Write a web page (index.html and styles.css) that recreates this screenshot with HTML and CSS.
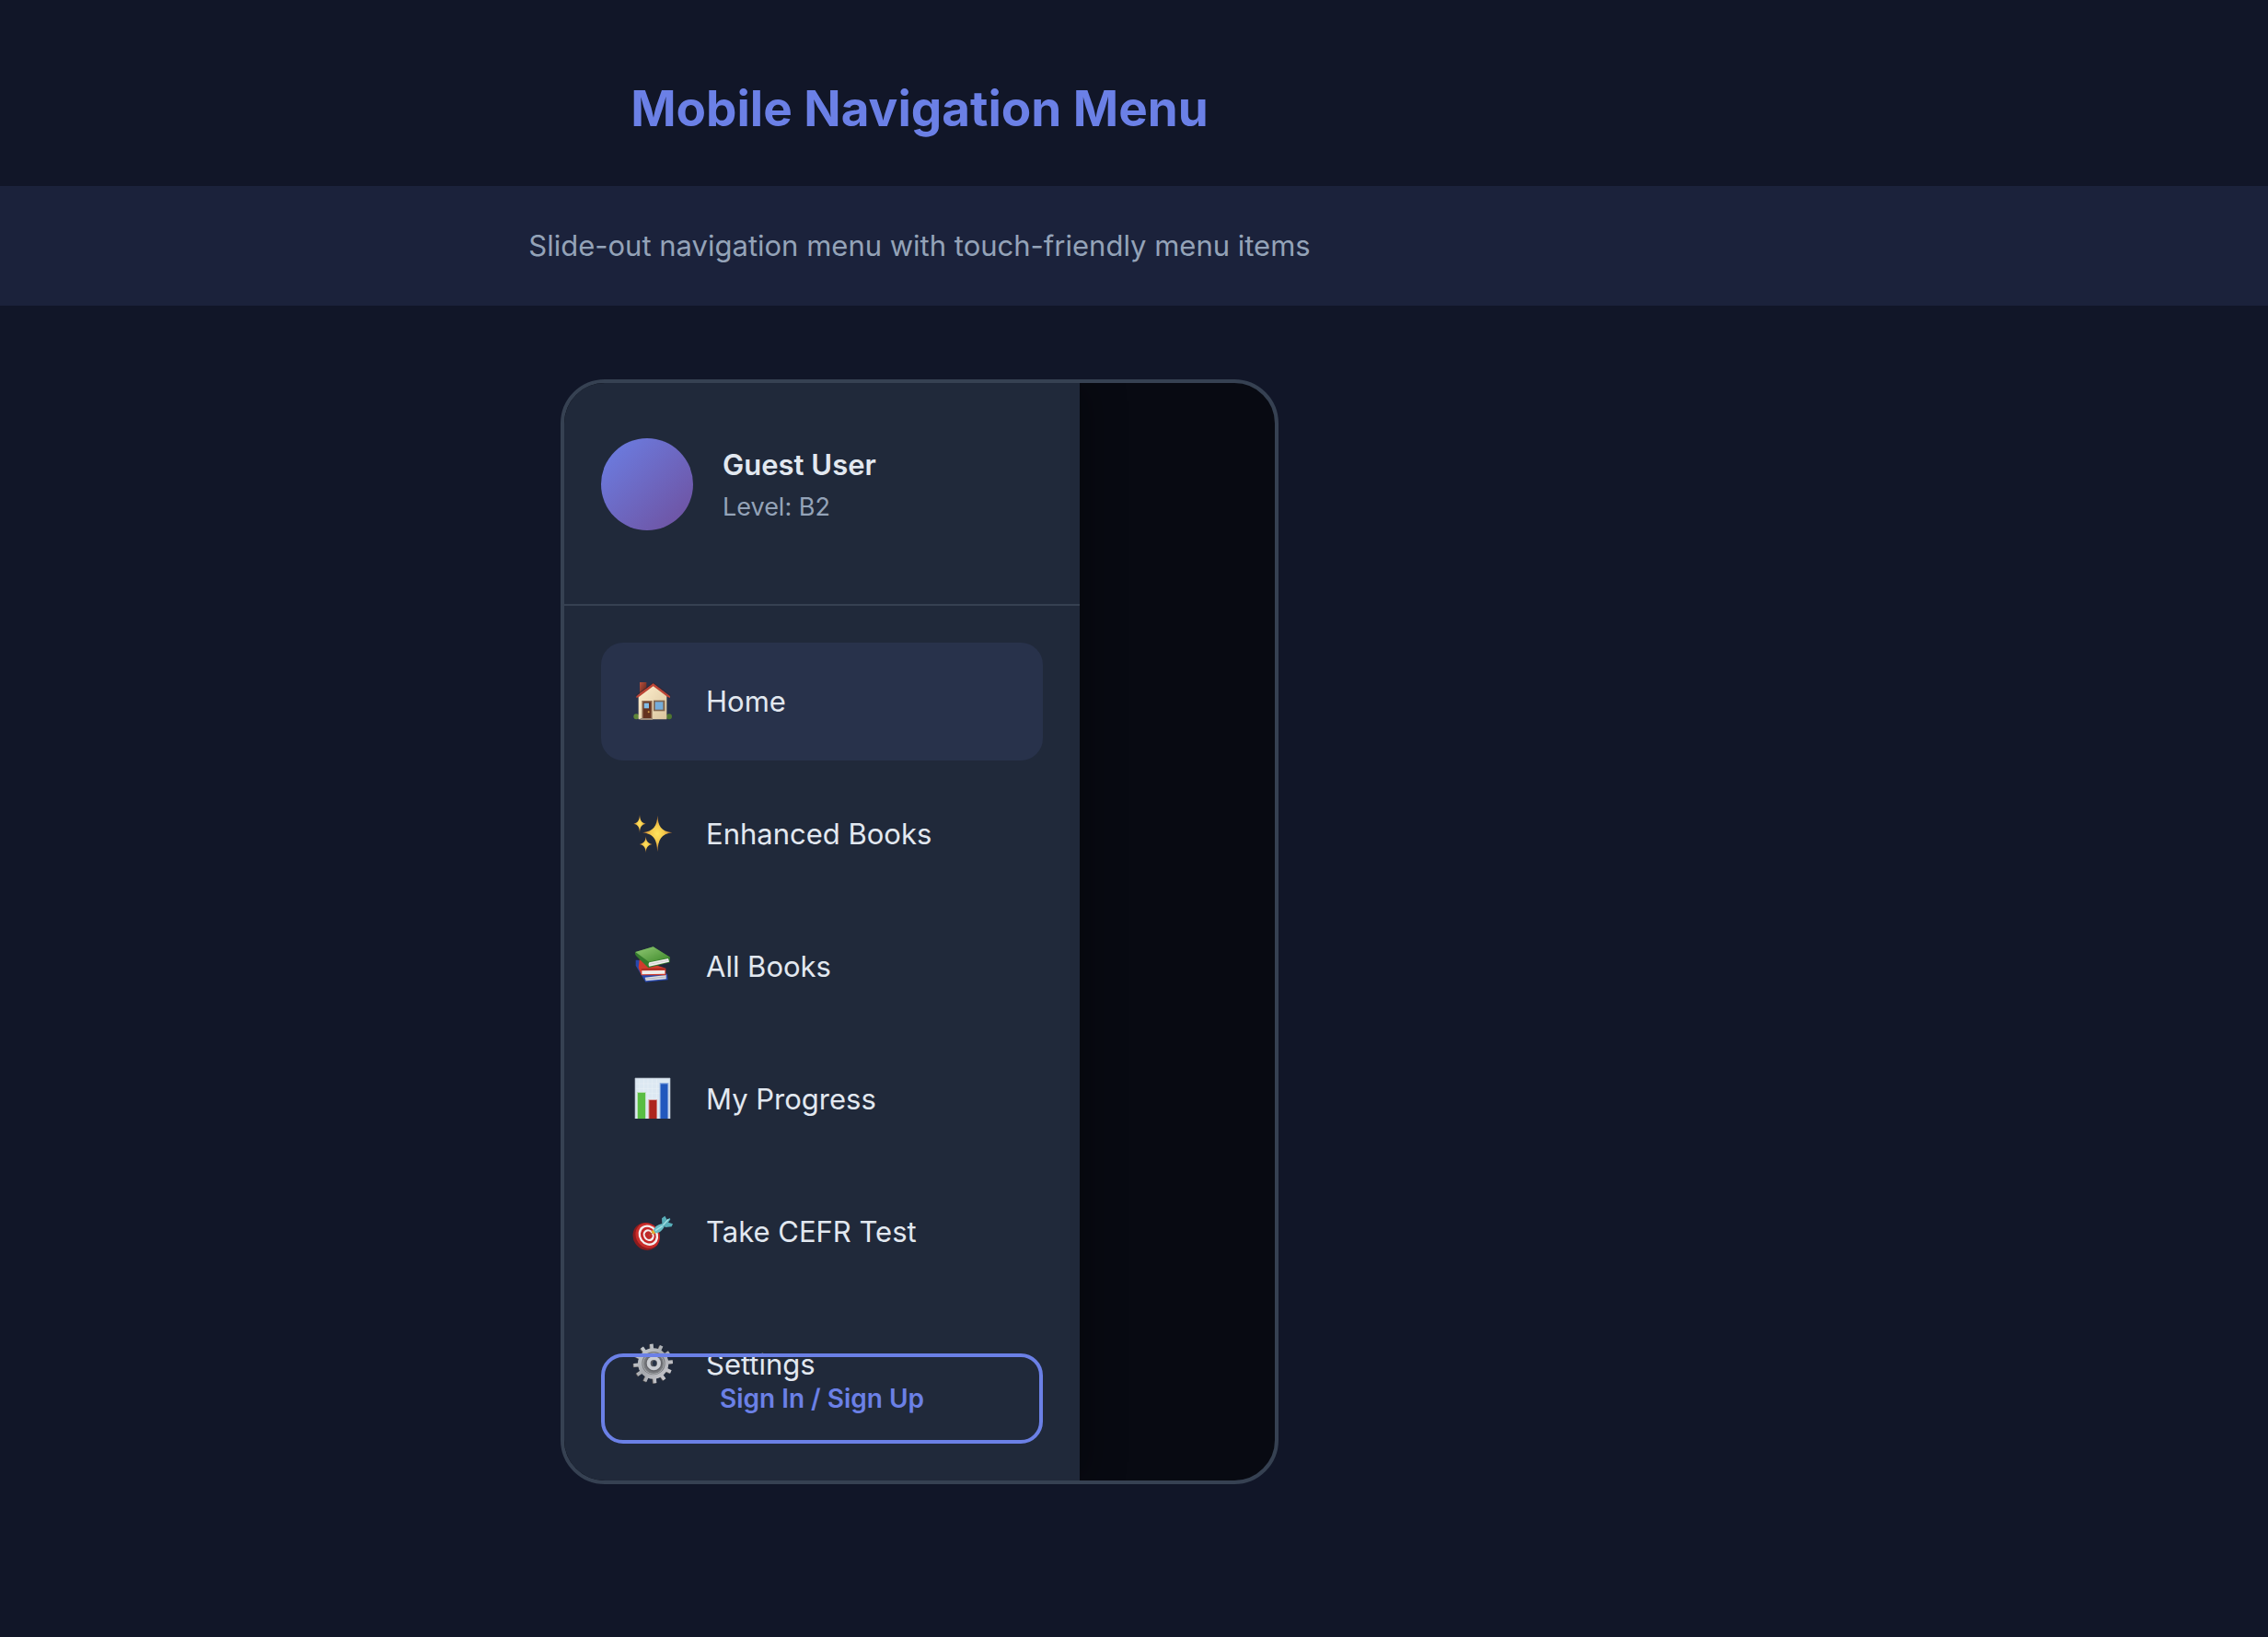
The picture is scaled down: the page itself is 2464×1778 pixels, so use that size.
FILE: index.html
```html
<!DOCTYPE html>
<html lang="en">
<head>
<meta charset="utf-8">
<meta name="viewport" content="width=device-width, initial-scale=1">
<title>Mobile Navigation Menu</title>
<link rel="stylesheet" href="styles.css">
</head>
<body>
<header class="page-header">
  <h1 class="page-title column">Mobile Navigation Menu</h1>
</header>
<div class="band">
  <p class="subtitle column">Slide-out navigation menu with touch-friendly menu items</p>
</div>
<main class="column stage">
  <div class="phone">
    <aside class="drawer">
      <div class="profile">
        <span class="avatar"></span>
        <div class="identity">
          <p class="user-name">Guest User</p>
          <p class="user-level">Level: B2</p>
        </div>
      </div>
      <nav class="menu" aria-label="Main">
        <a class="item active" href="#home" aria-current="page">
          <svg class="icon" viewBox="45 54 144 144" aria-hidden="true">
            <defs><linearGradient id="wall" x1="0" y1="0" x2="1" y2="1"><stop offset="0" stop-color="#fff0cf"/><stop offset="1" stop-color="#d9c49e"/></linearGradient>
            <linearGradient id="brick" x1="0" y1="0" x2="1" y2="1"><stop offset="0" stop-color="#b9513d"/><stop offset="1" stop-color="#542019"/></linearGradient></defs>
            <circle cx="64" cy="175" r="9" fill="#5f8639"/><circle cx="171" cy="175" r="9" fill="#4f7630"/>
            <path d="M75 63h22v22l-22 19z" fill="url(#brick)"/>
            <path d="M71 104 119 70l44 36v78H71z" fill="url(#wall)"/>
            <path d="m64 109 55-43 55 43v5l-8-3-47-35-47 35-8 3z" fill="#bd4435"/>
            <path d="m62 106 57-41 57 41" fill="none" stroke="#35222a" stroke-width="2"/>
            <path d="M82 123h34v60H82z" fill="#967359"/><path d="M86 127h26v54H86z" fill="#65321f"/>
            <path d="M89 131h16v17H89z" fill="#82bce8"/><circle cx="104" cy="160" r="3" fill="#d6a24b"/>
            <path d="M120 122h37v35h-37z" fill="#806650"/><path d="M125 127h26v25h-26z" fill="#75addb"/>
            <path d="M77 180h40v6H77z" fill="#9b8a7a"/>
          </svg>
          <span>Home</span>
        </a>
        <a class="item" href="#enhanced">
          <svg class="icon" viewBox="45 51 144 144" aria-hidden="true">
            <defs><radialGradient id="gold"><stop offset="0" stop-color="#ffe45e"/><stop offset=".45" stop-color="#f4c94b"/><stop offset="1" stop-color="#b96d2e"/></radialGradient></defs>
            <g fill="url(#gold)">
              <path d="M133 62c2 34 11 51 48 56-36 5-46 22-48 63-2-41-12-58-49-63 37-5 47-22 49-56z"/>
              <path d="M75 59c1 17 5 27 20 30-15 3-19 11-20 30-1-19-5-27-20-30 15-3 19-13 20-30z"/>
              <path d="M95 130c1 15 5 23 21 26-16 3-20 11-21 28-1-17-5-25-21-28 16-3 20-11 21-26z"/>
            </g>
          </svg>
          <span>Enhanced Books</span>
        </a>
        <a class="item" href="#books">
          <svg class="icon" viewBox="45 48 144 144" aria-hidden="true">
            <defs><linearGradient id="cover" x1="0" y1="0" x2="1" y2="1"><stop offset="0" stop-color="#91c975"/><stop offset="1" stop-color="#3d8929"/></linearGradient></defs>
            <path d="m62 98 8 0 95 46 2 19-73 7-32-54z" fill="#2747ad"/>
            <path d="m92 155 69-8v13l-66 6z" fill="#dcdde1"/><path d="m94 160 68-7" stroke="#9b9dac" stroke-width="2"/>
            <path d="m74 97 86 28v23l-80 0-9-25z" fill="#cf3c2d"/>
            <path d="m82 133 75-1v11l-75 2z" fill="#eeeeec"/><path d="m80 129 78-2" stroke="#94261e" stroke-width="3"/>
            <path d="m61 72 58-17 55 34-1 17-70 18-38-38c-6-5-6-11-4-14z" fill="#347b2c"/>
            <path d="m61 72 58-17 55 34-69 15z" fill="url(#cover)"/>
            <path d="m106 106 62-13 3 11-65 15c-3-4-3-9 0-13z" fill="#f0efed"/><path d="m107 112 62-13" stroke="#c1c0bf" stroke-width="2"/>
          </svg>
          <span>All Books</span>
        </a>
        <a class="item" href="#progress">
          <svg class="icon" viewBox="45 45 144 144" aria-hidden="true">
            <path d="M60 48h114v132H60z" fill="#dce8f2"/>
            <path d="M74 50v128M88 50v128M102 50v128M116 50v128M130 50v128M62 66h110M62 82h110M62 98h110M62 114h110" stroke="#e9f0f6" stroke-width="2"/>
            <path d="M60 48h114v132M60 48v132" fill="none" stroke="#b3bdc9" stroke-width="2"/>
            <path d="M66 93h29v87H66z" fill="#b8dfb5"/><path d="M69 96h24v84H69z" fill="#59bd43"/>
            <path d="M103 117h29v63h-29z" fill="#dba6a7"/><path d="M106 120h24v60h-24z" fill="#ad251e"/>
            <path d="M140 63h29v117h-29z" fill="#90afe1"/><path d="M143 67h23v113h-23z" fill="#2158bd"/>
          </svg>
          <span>My Progress</span>
        </a>
        <a class="item" href="#test">
          <svg class="icon" viewBox="45 42 144 144" aria-hidden="true">
            <ellipse cx="96" cy="129" rx="42" ry="46" transform="rotate(-35 96 129)" fill="#8d1b1d"/>
            <ellipse cx="101" cy="126" rx="38" ry="43" transform="rotate(-35 101 126)" fill="#c92c29"/>
            <ellipse cx="103" cy="125" rx="31" ry="35" transform="rotate(-35 103 125)" fill="#f4eeee"/>
            <ellipse cx="103" cy="125" rx="24" ry="28" transform="rotate(-35 103 125)" fill="#c52828"/>
            <ellipse cx="104" cy="125" rx="17" ry="20" transform="rotate(-35 104 125)" fill="#f4eeee"/>
            <ellipse cx="104" cy="125" rx="11" ry="13" transform="rotate(-35 104 125)" fill="#be2929"/>
            <path d="m105 125 17-12" stroke="#9e6632" stroke-width="3"/><path d="m112 112 8-5 8 10-9 5z" fill="#e6af31"/>
            <path d="M120 108c3-10 14-18 29-21l7 8c-6 13-17 23-30 23z" fill="#68bdc6"/>
            <path d="m148 87-1-17 10-8 7 12 9-5 2 4-7 10 15 5-4 9-20 2-7-7z" fill="#58aeb9"/>
            <path d="m151 92 18-19M126 110l23-15" stroke="#a5e1e3" stroke-width="4"/>
          </svg>
          <span>Take CEFR Test</span>
        </a>
        <a class="item" href="#settings">
          <svg class="icon" viewBox="45 39 144 144" aria-hidden="true">
            <defs><linearGradient id="steel" gradientUnits="userSpaceOnUse" x1="60" y1="45" x2="178" y2="170"><stop offset="0" stop-color="#d0d6da"/><stop offset=".5" stop-color="#a5a8ad"/><stop offset="1" stop-color="#d5d3d8"/></linearGradient></defs>
            <g stroke="#625c59" stroke-width="12" transform="translate(-2 1)"><path d="M119 44v128M55 108h128M87 53l64 110M64 76l110 64M64 140l110-64M87 163l64-110" transform="rotate(-5 119 108)"/></g>
            <g stroke="url(#steel)" stroke-width="11"><path d="M119 44v128M55 108h128M87 53l64 110M64 76l110 64M64 140l110-64M87 163l64-110" transform="rotate(-5 119 108)"/></g>
            <circle cx="119" cy="108" r="50" fill="url(#steel)"/>
            <circle cx="120" cy="107" r="38" fill="#77797d"/><circle cx="120" cy="108" r="34" fill="none" stroke="#aaadb0" stroke-width="3"/>
            <circle cx="121" cy="107" r="27" fill="#65666b"/><circle cx="121" cy="107" r="23" fill="#cacdd2"/>
            <circle cx="121" cy="107" r="11" fill="#55575d"/><ellipse cx="123" cy="107" rx="6" ry="9" fill="#263347"/>
          </svg>
          <span>Settings</span>
        </a>
      </nav>
      <button class="sign-in" type="button">Sign In / Sign Up</button>
    </aside>
  </div>
</main>
</body>
</html>
```
FILE: styles.css
```css
* {
  box-sizing: border-box;
}

body {
  margin: 0;
  min-height: 100vh;
  background: #111628;
  color: #e2e8f0;
  font-family: Inter, "Liberation Sans", sans-serif;
  font-size: 31px;
  line-height: 40px;
}

h1,
p {
  margin: 0;
}

.column {
  width: 100%;
  max-width: 1998px;
  text-align: center;
}

.page-header {
  padding: 86px 0 52px;
}

.page-title {
  color: #6b80e6;
  font-size: 53px;
  font-weight: 700;
  line-height: 64px;
}

.band {
  padding: 45px 0;
  background: #1b223b;
}

.subtitle {
  color: #94a3b8;
}

.stage {
  display: flex;
  justify-content: center;
  padding: 80px 0;
}

.phone {
  display: flex;
  width: 100%;
  max-width: 780px;
  min-height: 1200px;
  overflow: hidden;
  border: 4px solid #364152;
  border-radius: 48px;
  background: #080a12;
  text-align: left;
}

.drawer {
  position: relative;
  width: 560px;
  background: #20293a;
  box-shadow: 8px 0 40px rgba(0, 0, 0, 0.3);
}

.profile {
  display: flex;
  align-items: center;
  gap: 32px;
  padding: 60px 40px 80px;
  border-bottom: 2px solid #364152;
}

.avatar {
  width: 100px;
  height: 100px;
  border-radius: 50%;
  background: linear-gradient(135deg, #6b80e6, #6f4f9c);
}

.identity {
  padding-top: 4px;
}

.user-name {
  margin-bottom: 6px;
  font-weight: 600;
}

.user-level {
  color: #94a3b8;
  font-size: 27px;
}

.menu {
  display: flex;
  flex-direction: column;
  gap: 16px;
  padding: 40px;
}

.item {
  display: flex;
  align-items: center;
  gap: 34px;
  padding: 40px 32px;
  border-radius: 24px;
  color: inherit;
  text-decoration: none;
}

.active {
  background: #28324b;
}

.icon {
  width: 48px;
  height: 48px;
}

.sign-in {
  position: absolute;
  right: 40px;
  bottom: 40px;
  left: 40px;
  padding: 25px 32px;
  border: 4px solid #6b80e6;
  border-radius: 24px;
  background: transparent;
  color: #6b80e6;
  font: 600 28px/40px Inter, "Liberation Sans", sans-serif;
}
```
